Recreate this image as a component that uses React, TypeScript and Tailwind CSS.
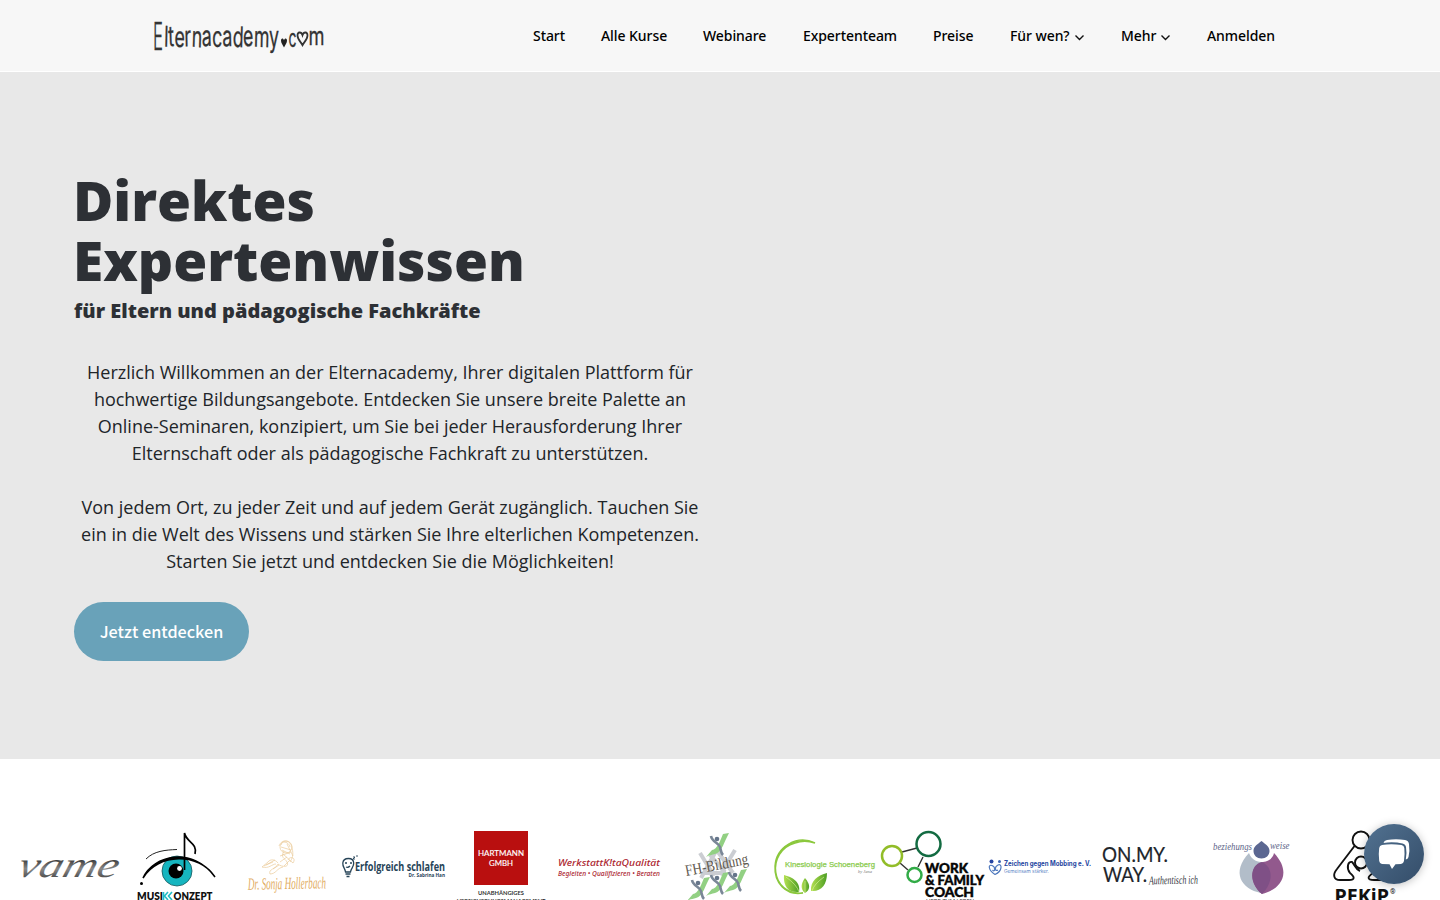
import React from "react";

type NavItem = { label: string; menu?: boolean; width: string };

const nav: NavItem[] = [
  { label: "Start", width: "w-8" },
  { label: "Alle Kurse", width: "w-[66px]" },
  { label: "Webinare", width: "w-16" },
  { label: "Expertenteam", width: "w-[94px]" },
  { label: "Preise", width: "w-[41px]" },
  { label: "Für wen?", menu: true, width: "w-[75px]" },
  { label: "Mehr", menu: true, width: "w-[50px]" },
  { label: "Anmelden", width: "w-[68px]" },
];

const HEART = "M0 8C-2 5-4 3.500-4 1C-4-1.500-1-2 0 0.800C1-2 4-1.500 4 1C4 3.500 2 5 0 8Z";

type TProps = {
  x: number;
  y: number;
  w: number;
  size: number;
  fill: string;
  font?: string;
  weight?: number;
  italic?: boolean;
  stroke?: number;
  rotate?: string;
  children: string;
};

function T({ x, y, w, size, fill, font = "Open Sans", weight = 400, italic, stroke, rotate, children }: TProps) {
  return (
    <text
      x={x}
      y={y}
      rotate={rotate}
      textLength={w}
      lengthAdjust="spacingAndGlyphs"
      fontSize={size}
      fill={fill}
      stroke={stroke ? fill : undefined}
      strokeWidth={stroke}
      fontFamily={`"${font}", sans-serif`}
      fontWeight={weight}
      fontStyle={italic ? "italic" : "normal"}
    >
      {children}
    </text>
  );
}

function SiteLogo() {
  return (
    <svg className="overflow-visible" width="180" height="40" viewBox="150 16 180 40" aria-label="Elternacademy.com">
      <T x={153} y={49.500} w={10} size={38} fill="#333" font="Inter" weight={300} stroke={0.3}>E</T>
      <T x={164} y={46.500} w={115} size={28.500} fill="#333" font="Inter" weight={400} stroke={0.3} rotate="2 -3 3 -2 3 -3 2 -2 3 -3 2 0">lternacademy</T>
      <path d={HEART} transform="translate(284 39.500) scale(.75 1)" fill="#222" />
      <T x={288.500} y={46.500} w={8} size={25} fill="#333" font="Inter" stroke={0.3}>c</T>
      <path d={HEART} transform="translate(302.500 34) scale(1.250 1.400)" fill="none" stroke="#333" strokeWidth="1.400" />
      <T x={308.500} y={44.500} w={16} size={25} fill="#333" font="Inter" stroke={0.3}>m</T>
    </svg>
  );
}

function Person({ x, y }: { x: number; y: number }) {
  return (
    <g transform={`translate(${x} ${y})`}>
      <path d="M-12 12L-6 5C-1 5 3-6 5-11L11-12C6-3 4 7-3 9C-6 10-9 10-12 12Z" fill="#92d083" />
      <path d="M-7-9C-6-3 1-2 2 2C3 6 3 8 5 10" fill="none" stroke="#7a8797" strokeWidth="2.600" />
      <circle cx="-1" cy="-6" r="2.300" fill="#65758a" />
    </g>
  );
}

function Vame() {
  return (
    <>
      <defs>
        <linearGradient id="vame" x1="0" y1="0" x2="0" y2="1">
          <stop offset="0.300" stopColor="#222" />
          <stop offset=".6" stopColor="#888" />
          <stop offset="1" stopColor="#222" />
        </linearGradient>
      </defs>
      <g transform="translate(0 877) skewX(-16)">
        <T x={16} y={0} w={100} size={36} fill="url(#vame)" font="Liberation Serif" italic>vame</T>
      </g>
    </>
  );
}

function Musik() {
  return (
    <>
      <circle cx="177" cy="871" r="15" fill="#16b5bf" stroke="#17565b" strokeWidth=".8" />
      <circle cx="176" cy="871" r="7.500" fill="#000" />
      <circle cx="179.500" cy="868.500" r="2.400" fill="#fff" />
      <path d="M143 878C153 855 193 846 215 877C199 852 158 853 143 878Z" fill="#000" stroke="#000" strokeWidth="1.500" />
      <path d="M146 859C154 851 165 850 177 849.500" fill="none" stroke="#222" strokeWidth="1" />
      <path d="M184.500 870V833C186 842 198 843 195 854" fill="none" stroke="#000" strokeWidth="1.700" />
      <circle cx="141.500" cy="883.500" r="1.500" />
      <T x={137} y={900} w={26} size={11} fill="#111" font="Lato" weight={800}>MUSI</T>
      <path d="M163.500 892V900M168 892L164.500 896L168 900M172 892L168.500 896L172 900" fill="none" stroke="#22bcc5" strokeWidth="1.600" />
      <T x={173.500} y={900} w={39} size={11} fill="#111" font="Lato" weight={800}>ONZEPT</T>
    </>
  );
}

function Sonja() {
  return (
    <>
      <g fill="none" stroke="#ebcb9b" strokeWidth=".7">
        <circle cx="286" cy="847" r="6" />
        <path d="M279 846C282 838 291 840 292 848C294 855 292 859 290 862M281 845C282 840 289 842 290 847M284 851C280 858 285 858 287 862C290 868 281 867 278 864C276 869 268 869 270 874C276 874 277 868 283 867M278 863C275 859 270 859 268 862L262 867C269 869 272 864 276 864M283 854L293 863C297 857 289 856 288 860M264 866L275 860M280 856L291 852M287 844L293 856M266 865L273 862M273 869L279 865M282 850L290 854M281 847L291 850M280 862L287 857M284 866L290 860" />
      </g>
      <g transform="rotate(-1 286 887)">
        <T x={248} y={889} w={78} size={17} fill="#dfab60" font="Liberation Serif" italic>Dr. Sonja Hollerbach</T>
      </g>
    </>
  );
}

function Schlafen() {
  return (
    <>
      <g fill="none" stroke="#274458" strokeWidth="1.300">
        <path d="M345.500 872C345 868 342.500 867 342.800 863C343.500 857 353.500 857 353.700 863C354 867 351 868 350.500 872ZM345.500 874H350.500M346.500 876.500H349.500M345 863H347M350 863H352M346 867Q348 868 350 866" />
        <path d="M353 857H355L353 859H355M356 856H358" strokeWidth=".9" />
      </g>
      <T x={355} y={870.500} w={90} size={12.300} fill="#274458" weight={700}>Erfolgreich schlafen</T>
      <T x={408.500} y={876.500} w={36.500} size={5.700} fill="#274458" weight={700}>Dr. Sabrina Han</T>
    </>
  );
}

function Hartmann() {
  return (
    <>
      <rect x="474" y="831" width="54" height="54" fill="#b90f0f" />
      <T x={478} y={856.300} w={46} size={8.400} fill="#fff" font="Lato" stroke={0.15}>HARTMANN</T>
      <T x={489} y={865.800} w={24} size={8.400} fill="#fff" font="Lato" stroke={0.15}>GMBH</T>
      <T x={478} y={894.500} w={46} size={5.700} fill="#333" font="Lato" weight={700}>UNABHÄNGIGES</T>
      <T x={457} y={902.500} w={88.500} size={5.700} fill="#333" font="Lato" weight={700}>VERSICHERUNGSMANAGEMENT</T>
    </>
  );
}

function Werkstatt() {
  return (
    <>
      <T x={558} y={865.500} w={102} size={9.500} fill="#ac2630" font="Noto Sans" weight={500} italic>WerkstattK!taQualität</T>
      <T x={558} y={875.500} w={102} size={6.800} fill="#ac2630" font="Noto Sans" weight={500} italic>Begleiten • Qualifizieren • Beraten</T>
    </>
  );
}

function FhBildung() {
  return (
    <>
      <g opacity=".45" fill="none" stroke="#8c919b" strokeWidth="4">
        <path d="M700 853L714 876M716 851L701 878M718 852L733 873M735 850L720 875M703 873H726M710 855L725 872" />
      </g>
      <Person x={718} y={845} />
      <Person x={699} y={889} />
      <Person x={718} y={884} />
      <Person x={736} y={881} />
      <g transform="rotate(-11 717 867)">
        <T x={685} y={870} w={64} size={16} fill="#5f594f" font="Liberation Serif">FH-Bildung</T>
      </g>
    </>
  );
}

function Kinesiologie() {
  return (
    <>
      <defs>
        <linearGradient id="leaf">
          <stop stopColor="#b4e050" />
          <stop offset="1" stopColor="#4d9e24" />
        </linearGradient>
      </defs>
      <path d="M814 843C796 834 775 847 774 866C773 883 785 896 802 893C769 896 765 851 794 843C802 840 808 841 814 843Z" transform="translate(1 0)" fill="#8bc83d" stroke="#8bc83d" strokeWidth="1.400" />
      <g fill="url(#leaf)">
        <path d="M784 875C792 877 801 882 799 892C789 893 783 887 784 875Z" />
        <path d="M805 878C811 885 810 890 805 893C800 889 801 883 805 878Z" />
        <path d="M827 873C827 885 821 892 811 891C810 881 818 875 827 873Z" />
      </g>
      <path d="M786 877Q797 885 799 892M824 877Q814 884 812 891M805 881V893" fill="none" stroke="#ddf5a2" strokeWidth=".6" />
      <T x={785} y={866.500} w={90} size={7.800} fill="#8acb4c" font="Liberation Sans" stroke={0.25}>Kinesiologie Schoeneberg</T>
      <T x={858} y={873} w={14} size={4.600} fill="#777" font="Liberation Serif" italic>by Jana</T>
    </>
  );
}

function WorkFamily() {
  return (
    <>
      <path d="M902 852L917 848M900 863L908 870M923 857L918 867" stroke="#333" strokeWidth="1.400" />
      <g fill="none" strokeWidth="2.500">
        <circle cx="928.500" cy="844" r="12" stroke="#136b42" />
        <circle cx="892" cy="856" r="10" stroke="#92bd28" />
        <circle cx="914.500" cy="875" r="7" stroke="#31ab46" />
      </g>
      <T x={925} y={873} w={43} size={12.300} fill="#050505" font="Lato" weight={900} stroke={0.4}>WORK</T>
      <T x={925} y={885} w={59} size={12.300} fill="#050505" font="Lato" weight={900} stroke={0.4}>&amp; FAMILY</T>
      <T x={925} y={897} w={49} size={12.300} fill="#050505" font="Lato" weight={900} stroke={0.4}>COACH</T>
      <T x={926} y={903} w={48} size={5} fill="#333" font="Lato">LIEBE ZUM LEBEN</T>
    </>
  );
}

function Zeichen() {
  return (
    <>
      <circle cx="991.500" cy="861.500" r="2" fill="#2746a3" />
      <circle cx="999.500" cy="861.500" r="1.500" fill="#3d65b4" />
      <path d="M995 874.500C988 870 988 864 992 865.500C996 867 995 873 992.500 870M995 874.500C1003 871 1002 863 998 865C994 867 995 872 998 870" fill="none" stroke="#4e78bd" strokeWidth="1.200" />
      <T x={1004} y={866.300} w={87} size={7} fill="#2546a1" font="Inter" weight={700}>Zeichen gegen Mobbing e. V.</T>
      <T x={1004} y={872.500} w={45} size={4.500} fill="#5781c4" font="Inter">Gemeinsam stärker.</T>
    </>
  );
}

function OnMyWay() {
  return (
    <>
      <T x={1102} y={861.500} w={66} size={21.500} fill="#20242a" font="Lato" stroke={0.2}>ON.MY.</T>
      <T x={1103} y={881.500} w={44} size={21.500} fill="#20242a" font="Lato" stroke={0.2}>WAY.</T>
      <g transform="rotate(-1 1173 882)">
        <T x={1149} y={884} w={49} size={12} fill="#33363c" font="Liberation Serif" italic>Authentisch ich</T>
      </g>
    </>
  );
}

function Beziehungsweise() {
  return (
    <>
      <path d="M1249 853C1252 861 1258 862 1263 862C1251 867 1249 884 1261 893C1241 889 1231 872 1249 853Z" fill="#b2bdc9" />
      <path d="M1274 853C1292 872 1282 889 1262 894C1249 884 1249 865 1263 862C1269 861 1273 858 1274 853Z" fill="#92598d" />
      <path d="M1262 862C1273 867 1274 882 1262 894C1249 884 1249 865 1262 862Z" fill="#7f5086" />
      <path
        d="M1261.500 841C1265 844 1269.500 846 1269.500 851C1269.500 855.500 1266 858.500 1261.500 858.500C1257 858.500 1253.500 855.500 1253.500 851C1253.500 846 1258 844 1261.500 841Z"
        fill="#5b6791"
        stroke="#fff"
        strokeWidth="5"
        paintOrder="stroke"
      />
      <T x={1213} y={850} w={39} size={10.500} fill="#5c6488" font="Liberation Serif" italic>beziehungs</T>
      <T x={1270} y={849} w={19.500} size={10.500} fill="#5c6488" font="Liberation Serif" italic>weise</T>
    </>
  );
}

function Pekip() {
  return (
    <>
      <g fill="none" stroke="#111" strokeWidth="1.900">
        <circle cx="1361" cy="840" r="8.500" />
        <circle cx="1361" cy="862.500" r="6" />
        <path d="M1354.500 846L1337 869C1332 875 1334 880 1340 880H1349C1355 880 1355 877 1350 873C1346 868 1348 861 1352 862C1355 865 1355 869 1360 871M1383 880H1374C1367 880 1367 877 1373 873" />
      </g>
      <T x={1334.500} y={902.500} w={54.500} size={20} fill="#111" font="Noto Sans" weight={700}>PEKiP</T>
      <T x={1390} y={893.500} w={5.500} size={6.500} fill="#111" font="Roboto">®</T>
    </>
  );
}

const partners = [
  Vame, Musik, Sonja, Schlafen, Hartmann, Werkstatt, FhBildung,
  Kinesiologie, WorkFamily, Zeichen, OnMyWay, Beziehungsweise, Pekip,
];

export default function App() {
  return (
    <div className="relative flex h-[900px] w-full flex-col overflow-hidden bg-white">
      <header className="flex h-[71px] shrink-0 items-center justify-between bg-[#f7f7f7] pl-[150px] pr-[165px]">
        <SiteLogo />
        <nav className="flex gap-9 font-['Noto_Sans',sans-serif] text-[14px] font-medium tracking-[-0.07px] text-black">
          {nav.map((item) => (
            <a key={item.label} className={`flex items-center gap-1 whitespace-nowrap ${item.width}`}>
              {item.label}
              {item.menu && (
                <svg className="ml-auto mt-1 shrink-0" width="11" height="8" viewBox="0 0 11 8" fill="none" stroke="#111" strokeWidth="1.400">
                  <path d="M1.500 1.500L5.500 5.500L9.500 1.500" />
                </svg>
              )}
            </a>
          ))}
        </nav>
      </header>

      <main className="mt-px h-[687px] shrink-0 bg-[#e8e8e8] pl-[74px] pt-[98px] font-['Open_Sans',sans-serif]">
        <h1 className="-ml-px text-[55px] font-extrabold leading-[60px] text-[#2d3035]">
          Direktes
          <br />
          Expertenwissen
        </h1>
        <h2 className="mt-[5px] text-[20px] font-extrabold leading-8 text-[#2d3035]">
          für Eltern und pädagogische Fachkräfte
        </h2>
        <div className="mt-8 w-[632px] whitespace-nowrap text-center text-[18px] leading-[27px] text-[#212529]">
          <p>
            Herzlich Willkommen an der Elternacademy, Ihrer digitalen Plattform für
            <br />
            hochwertige Bildungsangebote. Entdecken Sie unsere breite Palette an
            <br />
            Online-Seminaren, konzipiert, um Sie bei jeder Herausforderung Ihrer
            <br />
            Elternschaft oder als pädagogische Fachkraft zu unterstützen.
          </p>
          <p className="mt-[27px]">
            Von jedem Ort, zu jeder Zeit und auf jedem Gerät zugänglich. Tauchen Sie
            <br />
            ein in die Welt des Wissens und stärken Sie Ihre elterlichen Kompetenzen.
            <br />
            Starten Sie jetzt und entdecken Sie die Möglichkeiten!
          </p>
        </div>
        <button className="mt-[27px] flex h-[59px] w-[175px] items-center justify-center rounded-full bg-[#69a2b9] pb-px font-['Noto_Sans_CJK_SC',sans-serif] text-[16.2px] font-medium text-white">
          Jetzt entdecken
        </button>
      </main>

      <section className="flex pl-[15px] pt-[61px]">
        {partners.map((Logo, i) => (
          <svg key={i} className="shrink-0 overflow-visible" width="108" height="80" viewBox={`${15 + i * 108} 820 108 80`}>
            <Logo />
          </svg>
        ))}
      </section>

      <button
        aria-label="Chat"
        className="absolute bottom-4 right-4 flex size-[60px] items-center justify-center rounded-full bg-linear-to-br from-[#527291] to-[#344d69] shadow-[0_1px_8px_rgba(0,0,0,0.25)]"
      >
        <svg width="34" height="34" viewBox="0 0 34 34" fill="#fff">
          <path d="M5 8Q14 6.500 24.500 8Q27 8.500 27.300 11Q28 17 27 24Q26.500 26.500 24 27L18.500 27.300L15 32L12.500 27.300L5 27Q2.500 26.500 2.200 24Q1.300 17 2.200 11Q2.500 8.500 5 8Z" />
          <path d="M6.500 6Q7 3.500 10 3Q19 1.500 28 3Q31.500 3.500 32 7Q33 14 31.500 20Q31 22 28.800 22.500Q30 15 29 10Q28.500 7 25.500 6.500Q16 4.500 6.500 6Z" />
        </svg>
      </button>
    </div>
  );
}
